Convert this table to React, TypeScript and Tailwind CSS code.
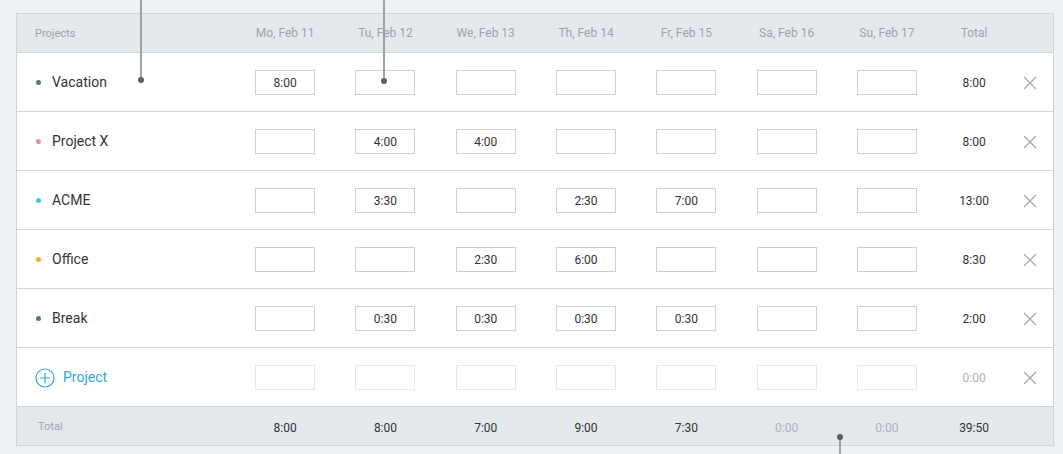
import React from "react";

const days = ["Mo, Feb 11", "Tu, Feb 12", "We, Feb 13", "Th, Feb 14", "Fr, Feb 15", "Sa, Feb 16", "Su, Feb 17"];

const rows = [
  { name: "Vacation", color: "#5f7482", vals: ["8:00", "", "", "", "", "", ""], total: "8:00" },
  { name: "Project X", color: "#ee88a6", vals: ["", "4:00", "4:00", "", "", "", ""], total: "8:00" },
  { name: "ACME", color: "#45bfee", vals: ["", "3:30", "", "2:30", "7:00", "", ""], total: "13:00" },
  { name: "Office", color: "#f2b01e", vals: ["", "", "2:30", "6:00", "", "", ""], total: "8:30" },
  { name: "Break", color: "#5f7482", vals: ["", "0:30", "0:30", "0:30", "0:30", "", ""], total: "2:00" },
];

const footer = [
  { v: "8:00", muted: false },
  { v: "8:00", muted: false },
  { v: "7:00", muted: false },
  { v: "9:00", muted: false },
  { v: "7:30", muted: false },
  { v: "0:00", muted: true },
  { v: "0:00", muted: true },
];

function XIcon() {
  return (
    <svg width="14" height="14" viewBox="0 0 14 14" fill="none">
      <path d="M1 1L13 13M13 1L1 13" stroke="#a2a7ac" strokeWidth="1.2" />
    </svg>
  );
}

function PlusCircle() {
  return (
    <svg width="20" height="20" viewBox="0 0 20 20" fill="none">
      <circle cx="10" cy="10" r="9" stroke="#2fa6dc" strokeWidth="1.2" />
      <path d="M10 5V15M5 10H15" stroke="#2fa6dc" strokeWidth="1.2" />
    </svg>
  );
}

export default function App() {
  return (
    <div
      className="relative w-[1063px] h-[454px] overflow-hidden bg-[#eef2f5] pt-[13px] pl-[16px]"
      style={{ fontFamily: "Roboto, 'Liberation Sans', sans-serif" }}
    >
      <div className="w-[1038px] border border-[#cfd5db] bg-white">
        {/* header */}
        <div className="flex h-[39px] items-center bg-[#e4e9ee] border-b border-[#cfd5db] text-[12px] text-[#9ea4aa]">
          <div className="w-[218px] pl-[18px] text-[11px] pt-[3px]">Projects</div>
          {days.map((d) => (
            <div key={d} className="w-[100.3px] text-center">
              {d}
            </div>
          ))}
          <div className="w-[74px] text-center">Total</div>
          <div className="flex-1" />
        </div>

        {rows.map((r) => (
          <div key={r.name} className="flex h-[59px] items-center border-b border-[#cfd5db] pt-[1px]">
            <div className="w-[218px] pl-[19px] flex items-center gap-[11px]">
              <span className="w-[5px] h-[5px] rounded-full" style={{ backgroundColor: r.color }} />
              <span className="text-[14px] text-[#333]">{r.name}</span>
            </div>
            {r.vals.map((v, i) => (
              <div key={i} className="w-[100.3px] flex justify-center">
                <div className="w-[60px] h-[25px] border border-[#cbd0d5] flex items-center justify-center text-[12px] text-[#333]">
                  {v}
                </div>
              </div>
            ))}
            <div className="w-[74px] text-center text-[12px] text-[#333]">{r.total}</div>
            <div className="flex-1 flex justify-center pr-[4px]">
              <XIcon />
            </div>
          </div>
        ))}

        {/* add project row */}
        <div className="flex h-[59px] items-center border-b border-[#cfd5db] pt-[1px]">
          <div className="w-[218px] pl-[18px] flex items-center gap-[8px]">
            <PlusCircle />
            <span className="text-[14px] text-[#2fa6dc]">Project</span>
          </div>
          {days.map((d) => (
            <div key={d} className="w-[100.3px] flex justify-center">
              <div className="w-[60px] h-[25px] border border-[#e6e9ec]" />
            </div>
          ))}
          <div className="w-[74px] text-center text-[12px] text-[#aeb3b8]">0:00</div>
          <div className="flex-1 flex justify-center pr-[4px]">
            <XIcon />
          </div>
        </div>

        {/* footer */}
        <div className="flex h-[38px] items-center bg-[#e4e9ee] text-[12px] pt-[3px]">
          <div className="w-[218px] pl-[21px] text-[11px] text-[#9ea4aa]">Total</div>
          {footer.map((f, i) => (
            <div key={i} className={`w-[100.3px] text-center ${f.muted ? "text-[#aeb3b8]" : "text-[#333]"}`}>
              {f.v}
            </div>
          ))}
          <div className="w-[74px] text-center text-[#333]">39:50</div>
          <div className="flex-1" />
        </div>
      </div>

      {/* annotation pins */}
      <div className="absolute left-[140px] top-0 w-[2px] h-[80px] bg-[#9ea3a8]" />
      <div className="absolute left-[138px] top-[77px] w-[6px] h-[6px] rounded-full bg-[#5a5f64]" />
      <div className="absolute left-[383px] top-0 w-[2px] h-[81px] bg-[#9ea3a8]" />
      <div className="absolute left-[381px] top-[78px] w-[6px] h-[6px] rounded-full bg-[#5a5f64]" />
      <div className="absolute left-[839px] top-[437px] w-[2px] h-[17px] bg-[#9ea3a8]" />
      <div className="absolute left-[837px] top-[434px] w-[6px] h-[6px] rounded-full bg-[#5a5f64]" />
    </div>
  );
}
